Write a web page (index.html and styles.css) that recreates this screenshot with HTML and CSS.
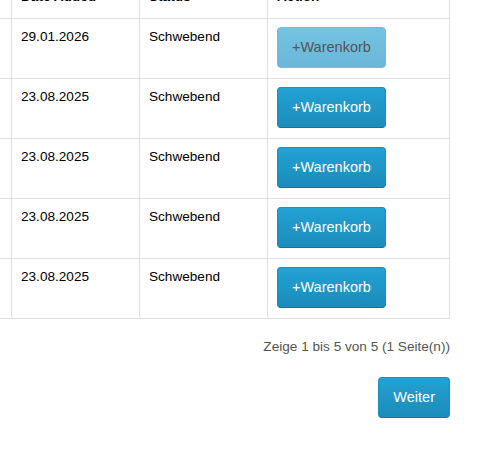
FILE: index.html
```html
<!DOCTYPE html>
<html lang="de">
<head>
<meta charset="utf-8">
<title>Warenkorb</title>
<link rel="stylesheet" href="styles.css">
</head>
<body>
<div class="wrap">
  <table class="orders">
    <colgroup>
      <col class="c-prod">
      <col class="c-date">
      <col class="c-status">
      <col>
    </colgroup>
    <thead>
      <tr><th>Produkt</th><th>Date Added</th><th>Status</th><th>Action</th></tr>
    </thead>
    <tbody>
      <tr><td>Artikel 1</td><td>29.01.2026</td><td>Schwebend</td><td><button class="btn btn-disabled" disabled>+Warenkorb</button></td></tr>
      <tr><td>Artikel 2</td><td>23.08.2025</td><td>Schwebend</td><td><button class="btn">+Warenkorb</button></td></tr>
      <tr><td>Artikel 3</td><td>23.08.2025</td><td>Schwebend</td><td><button class="btn">+Warenkorb</button></td></tr>
      <tr><td>Artikel 4</td><td>23.08.2025</td><td>Schwebend</td><td><button class="btn">+Warenkorb</button></td></tr>
      <tr><td>Artikel 5</td><td>23.08.2025</td><td>Schwebend</td><td><button class="btn">+Warenkorb</button></td></tr>
    </tbody>
  </table>
  <div class="pager-info">Zeige 1 bis 5 von 5 (1 Seite(n))</div>
  <div class="pager-actions"><button class="btn">Weiter</button></div>
</div>
</body>
</html>
```
FILE: styles.css
```css
html, body {
  margin: 0;
  padding: 0;
  background: #fff;
  overflow: hidden;
}
body {
  font-family: "Liberation Sans", Arial, sans-serif;
  font-size: 13.6px;
  line-height: 20px;
  color: #000;
}
.wrap {
  margin: -22px 50px 0 -117px;
}
.orders {
  width: 100%;
  border-collapse: collapse;
  table-layout: fixed;
}
.c-prod, .c-date, .c-status { width: 128px; }
.orders th, .orders td {
  border: 1px solid #dfe0e6;
  text-align: left;
  vertical-align: top;
}
.orders th {
  font-weight: bold;
  padding: 8px 8px 11px 9px;
}
.orders td {
  padding: 8px 8px 10px 9px;
}
.btn {
  display: inline-block;
  vertical-align: top;
  font-family: "Liberation Sans", Arial, sans-serif;
  font-size: 14.5px;
  line-height: 19px;
  padding: 10px 14px;
  color: #fff;
  background: linear-gradient(to bottom, #23a2d3, #1b8cbb);
  border: 1px solid #1b8fbf;
  border-bottom-color: #17739b;
  border-radius: 4px;
  cursor: pointer;
}
.btn-disabled {
  color: #555;
  background: linear-gradient(to bottom, #74c2e1, #6ab7d9);
  border-color: #6fbcdc;
  cursor: default;
}
.pager-info {
  margin-top: 18px;
  text-align: right;
  color: #555;
}
.pager-actions {
  margin-top: 20px;
  display: flex;
  justify-content: flex-end;
}
```
